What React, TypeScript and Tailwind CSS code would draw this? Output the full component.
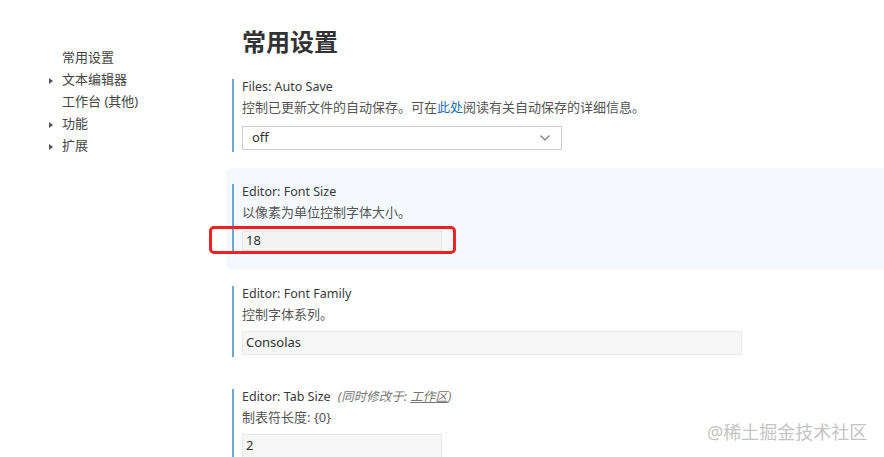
import type { ReactNode } from "react";

type NavItem = {
  label: string;
  arrow: boolean;
};

const navItems: NavItem[] = [
  { label: "常用设置", arrow: false },
  { label: "文本编辑器", arrow: true },
  { label: "工作台 (其他)", arrow: false },
  { label: "功能", arrow: true },
  { label: "扩展", arrow: true },
];

const font = {
  fontFamily: '"Noto Sans", "Noto Sans CJK SC", sans-serif',
};

function Arrow() {
  return (
    <svg width="6" height="8" viewBox="0 0 6 8" className="mt-[1px]">
      <path d="M1 1 L5 4 L1 7 Z" fill="#555" />
    </svg>
  );
}

function Chevron() {
  return (
    <svg width="12" height="8" viewBox="0 0 12 8">
      <path d="M1.5 1.5 L6 6 L10.5 1.5" fill="none" stroke="#777" strokeWidth="1.1" />
    </svg>
  );
}

type SectionProps = {
  title: ReactNode;
  desc: ReactNode;
  children: ReactNode;
  active?: boolean;
  tight?: boolean;
};

function Section({ title, desc, children, active, tight }: SectionProps) {
  return (
    <div
      className={`py-[16px] pl-[6px] ${
        active ? "rounded-l-[5px] bg-[#f5f9fe]" : ""
      }`}
    >
      <div className="border-l-2 border-[#6ba8d6] pb-[2px] pl-[8px]">
        <div className="h-[16px] text-[12.5px] leading-[16px] text-[#3a3a3a]">{title}</div>
        <div className="mt-[2px] h-[20px] text-[13px] leading-[20px] text-[#555]">{desc}</div>
        <div className={tight ? "mt-[7px]" : "mt-[9px]"}>{children}</div>
      </div>
    </div>
  );
}

export default function App() {
  return (
    <div
      className="relative flex h-[457px] w-[884px] overflow-hidden bg-white"
      style={font}
    >
      <aside className="w-[226px] shrink-0 pl-[48px] pt-[47px]">
        {navItems.map((item) => (
          <div
            key={item.label}
            className="flex h-[22px] items-center text-[13px] text-[#444]"
          >
            <span className="flex w-[14px] items-center">
              {item.arrow && <Arrow />}
            </span>
            {item.label}
          </div>
        ))}
      </aside>

      <main className="flex-1">
        <h1 className="h-[63px] pl-[16px] pt-[26px] text-[24px] font-bold leading-[32px] text-[#333]">
          常用设置
        </h1>

        <Section
          title="Files: Auto Save"
          desc={
            <>
              控制已更新文件的自动保存。可在
              <span className="text-[#1b6fb5]">此处</span>
              阅读有关自动保存的详细信息。
            </>
          }
        >
          <div className="flex h-[24px] w-[320px] items-center justify-between border border-[#cecece] bg-white pl-[9px] pr-[10px] text-[13px] text-[#333]">
            <span>off</span>
            <Chevron />
          </div>
        </Section>

        <Section active title="Editor: Font Size" desc="以像素为单位控制字体大小。">
          <div className="relative pb-[1px]">
            <div className="flex h-[20px] w-[200px] items-center border border-[#e6e6e6] bg-[#f4f4f4] pl-[3px] text-[13px] text-[#333]">
              18
            </div>
            <div className="absolute left-[-33px] top-[-5px] h-[28px] w-[247px] rounded-[5px] border-[3px] border-[#ee2222]" />
          </div>
        </Section>

        <Section tight title="Editor: Font Family" desc="控制字体系列。">
          <div className="flex h-[24px] w-[500px] items-center border border-[#e8e8e8] bg-[#f6f6f6] pl-[3px] text-[13px] text-[#333]">
            Consolas
          </div>
        </Section>

        <Section
          tight
          title={
            <>
              Editor: Tab Size
              <span className="ml-[7px] italic text-[#777]">
                (同时修改于: <span className="underline">工作区</span>)
              </span>
            </>
          }
          desc="制表符长度: {0}"
        >
          <div className="flex h-[24px] w-[200px] items-center border border-[#e8e8e8] bg-[#f6f6f6] pl-[3px] text-[13px] text-[#333]">
            2
          </div>
        </Section>
      </main>

      <div className="absolute left-[707px] top-[419px] text-[18px] text-[#c4c4c4]">
        @稀土掘金技术社区
      </div>
    </div>
  );
}
